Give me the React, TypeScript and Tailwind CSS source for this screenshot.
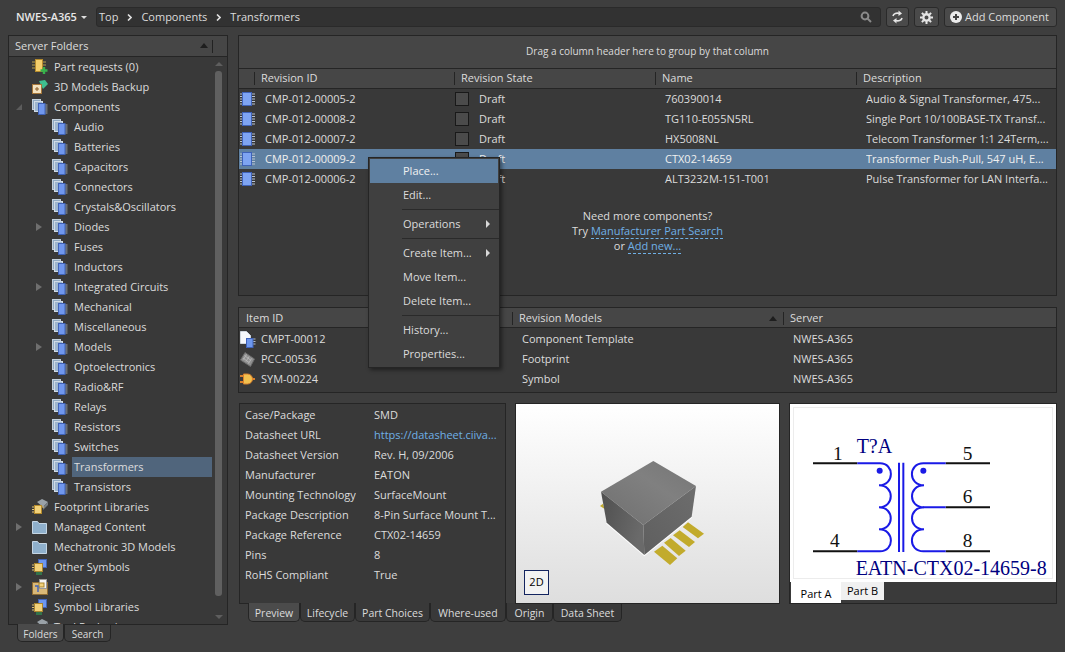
import React from "react";

const folders = [
  ["Audio", false], ["Batteries", false], ["Capacitors", false], ["Connectors", false],
  ["Crystals&Oscillators", false], ["Diodes", true], ["Fuses", false], ["Inductors", false],
  ["Integrated Circuits", true], ["Mechanical", false], ["Miscellaneous", false], ["Models", true],
  ["Optoelectronics", false], ["Radio&RF", false], ["Relays", false], ["Resistors", false],
  ["Switches", false], ["Transformers", false], ["Transistors", false],
] as const;

const revisions = [
  ["CMP-012-00005-2", "760390014", "Audio & Signal Transformer, 475..."],
  ["CMP-012-00008-2", "TG110-E055N5RL", "Single Port 10/100BASE-TX Transf..."],
  ["CMP-012-00007-2", "HX5008NL", "Telecom Transformer 1:1 24Term,..."],
  ["CMP-012-00009-2", "CTX02-14659", "Transformer Push-Pull, 547 uH, E..."],
  ["CMP-012-00006-2", "ALT3232M-151-T001", "Pulse Transformer for LAN Interfa..."],
];

const props = [
  ["Case/Package", "SMD"],
  ["Datasheet URL", "https://datasheet.ciiva..."],
  ["Datasheet Version", "Rev. H, 09/2006"],
  ["Manufacturer", "EATON"],
  ["Mounting Technology", "SurfaceMount"],
  ["Package Description", "8-Pin Surface Mount T..."],
  ["Package Reference", "CTX02-14659"],
  ["Pins", "8"],
  ["RoHS Compliant", "True"],
];

function ChipIcon() {
  return (
    <svg width="15" height="16" viewBox="0 0 15 16">
      <path d="M0 3h2M0 5.5h2M0 8h2M0 10.5h2M0 13h2M12 3h3M12 5.5h3M12 8h3M12 10.5h3M12 13h3" stroke="#b9c4d4" />
      <rect x="2.5" y="1.5" width="9" height="13" fill="#7ea4f2" stroke="#3f62b8" />
    </svg>
  );
}

function FolderChip() {
  return (
    <svg width="16" height="16" viewBox="0 0 16 16">
      <rect x="0.5" y="0.5" width="8" height="10" fill="#8fa9c2" stroke="#c3d1de" />
      <rect x="2.5" y="2.5" width="8" height="10" fill="#9db6cf" stroke="#d0dbe6" />
      <path d="M13 6h2.5M13 8h2.5M13 10h2.5M13 12h2.5M13 14h2.5" stroke="#9aa6b5" />
      <rect x="6.5" y="4.5" width="6.5" height="11" fill="#7097ee" stroke="#3f62b8" />
    </svg>
  );
}

function PlainFolder() {
  return (
    <svg width="15" height="13" viewBox="0 0 15 13">
      <path d="M0.5 0.5h5l1.5 2h7.5v10h-14z" fill="#8fb0cc" stroke="#c5d6e4" />
    </svg>
  );
}

function PartRequest() {
  return (
    <svg width="16" height="16" viewBox="0 0 16 16">
      <path d="M0 3h3M0 6h3M0 9h3M11 3h3M11 6h3" stroke="#b7a14e" />
      <rect x="3.5" y="0.5" width="7" height="12" fill="#f4cf6c" stroke="#b58b2c" />
      <path d="M12 8v7M8.5 11.5h7" stroke="#37b24d" strokeWidth="2.4" />
    </svg>
  );
}

function BackupIcon() {
  return (
    <svg width="16" height="16" viewBox="0 0 16 16">
      <path d="M7 2l6-1 3 4-5 5z" fill="#3fbf8f" />
      <rect x="0.5" y="5.5" width="9" height="9" fill="#f3e2c0" stroke="#a5763a" />
      <path d="M5 8v4M3 10h4" stroke="#8a5a24" />
    </svg>
  );
}

function FootprintLib({ gray = false }: { gray?: boolean }) {
  return (
    <svg width="16" height="16" viewBox="0 0 16 16">
      <path d="M5 3l5-3 6 3-5 5z" fill="#9aa2a8" />
      <path d="M11 8l5-5v3l-5 5z" fill="#767d82" />
      {!gray && <path d="M0 8h2M0 10.5h2M0 13h2M10 8h2" stroke="#e5c67a" />}
      {!gray && <rect x="2.5" y="6.5" width="7" height="8" fill="#f2d27b" stroke="#b58b2c" />}
    </svg>
  );
}

function OtherSymbols() {
  return (
    <svg width="16" height="16" viewBox="0 0 16 16">
      <rect x="6.5" y="0.5" width="8" height="8" fill="#6d97ee" stroke="#3f62b8" />
      <path d="M0 6h2M0 8.5h2M0 11h2" stroke="#e0c070" />
      <rect x="2.5" y="4.5" width="8" height="8" fill="#f2d27b" stroke="#a9852f" />
      <path d="M5 13v3M7 13v3M9 13v3" stroke="#2fae5c" />
    </svg>
  );
}

function ProjectsIcon() {
  return (
    <svg width="16" height="16" viewBox="0 0 16 16">
      <rect x="0.5" y="3.5" width="15" height="12" fill="#d9b877" stroke="#8f6c33" />
      <rect x="7.5" y="0.5" width="7" height="9" fill="#f4f4f4" stroke="#999" />
      <rect x="7" y="4" width="5" height="4" fill="#f2d27b" stroke="#a9852f" />
      <path d="M3 7h3v6" fill="none" stroke="#3f62b8" strokeWidth="1.4" />
    </svg>
  );
}

function DocIcon() {
  return (
    <svg width="16" height="17" viewBox="0 0 16 17">
      <path d="M0.5 0.5h6l4 4v8h-10z" fill="#f6f8fb" stroke="#cfd6de" />
      <path d="M13 8h2.5M13 10.5h2.5M13 13h2.5" stroke="#b4bdc8" />
      <rect x="6.5" y="7.5" width="6.5" height="9" fill="#6d97ee" stroke="#3f62b8" />
    </svg>
  );
}

function FootprintIcon() {
  return (
    <svg width="15" height="15" viewBox="0 0 15 15">
      <path d="M5 0.5l9.5 6.5-4 7.5-10-6.5z" fill="#8f8f8f" stroke="#6a6a6a" />
      <path d="M4.5 3.5l6 4.5M3 6l6 4.5M6.5 2.5l-3 5M9 4.5l-3 5M11.5 6.5l-3 5" stroke="#b5b5b5" />
    </svg>
  );
}

function SymbolIcon() {
  return (
    <svg width="15" height="13" viewBox="0 0 15 13">
      <path d="M0 3h4M0 9h4M11 6h4" stroke="#d9802c" strokeWidth="2" />
      <path d="M3.5 1h4a5 5 0 0 1 0 10h-4z" fill="#f2c14f" stroke="#d9802c" />
    </svg>
  );
}

function Crumb() {
  return (
    <svg className="mx-[9px]" width="5" height="7" viewBox="0 0 5 7" fill="none" stroke="#e0e0e0" strokeWidth="1.6">
      <path d="M1 0.5L4 3.5L1 6.5" />
    </svg>
  );
}

function TreeRow({ label, indent = false, arrow, icon, selected = false }: {
  label: string; indent?: boolean; arrow?: "open" | "closed"; icon: React.ReactNode; selected?: boolean;
}) {
  return (
    <div className={`h-5 flex items-center shrink-0 ${indent ? "pl-[27px]" : "pl-[7px]"}`}>
      <span className="w-[17px] flex justify-start shrink-0">
        {arrow === "closed" && <span className="w-0 h-0 border-y-[4px] border-y-transparent border-l-[6px] border-l-[#6f6f6f]" />}
        {arrow === "open" && <span className="w-0 h-0 border-b-[6px] border-b-[#5c5c5c] border-l-[6px] border-l-transparent" />}
      </span>
      <span className="w-[20px] flex justify-start shrink-0 -ml-[1px]">{icon}</span>
      <span className={`flex-1 h-5 leading-5 pl-[2px] ${selected ? "bg-[#50657c]" : ""}`}>{label}</span>
    </div>
  );
}

function LeftPanel() {
  return (
    <div className="flex flex-col ml-2 w-[220px]">
      <div className="h-[590px] border border-[#252525] bg-[#393939] flex flex-col overflow-hidden">
        <div className="h-[21px] shrink-0 bg-[#464646] border-b border-[#252525] flex items-center pl-[6px] relative">
          <span>Server Folders</span>
          <span className="absolute right-[19px] top-[7px] w-0 h-0 border-x-[4px] border-x-transparent border-b-[5px] border-b-[#1e1e1e]" />
          <span className="absolute right-[14px] top-[4px] w-px h-[13px] bg-[#222]" />
        </div>
        <div className="flex flex-1 min-h-0">
          <div className="flex-1 min-w-0 flex flex-col overflow-hidden">
            <TreeRow label="Part requests (0)" icon={<PartRequest />} />
            <TreeRow label="3D Models Backup" icon={<BackupIcon />} />
            <TreeRow label="Components" arrow="open" icon={<FolderChip />} />
            {folders.map(([name, hasKids]) => (
              <TreeRow key={name} label={name} indent arrow={hasKids ? "closed" : undefined} icon={<FolderChip />} selected={name === "Transformers"} />
            ))}
            <TreeRow label="Footprint Libraries" icon={<FootprintLib />} />
            <TreeRow label="Managed Content" arrow="closed" icon={<PlainFolder />} />
            <TreeRow label="Mechatronic 3D Models" icon={<PlainFolder />} />
            <TreeRow label="Other Symbols" icon={<OtherSymbols />} />
            <TreeRow label="Projects" arrow="closed" icon={<ProjectsIcon />} />
            <TreeRow label="Symbol Libraries" icon={<OtherSymbols />} />
            <TreeRow label="Tool Packaging" icon={<FootprintLib gray />} />
          </div>
          <div className="w-[13px] shrink-0 mr-[2px] flex flex-col items-center pt-[5px] pb-[5px]">
            <span className="w-0 h-0 border-x-[4px] border-x-transparent border-b-[4px] border-b-[#5e5e5e]" />
            <span className="w-[7px] mt-[5px] h-[525px] rounded-[3px] bg-[#606060]" />
            <span className="mt-auto w-0 h-0 border-x-[4px] border-x-transparent border-t-[4px] border-t-[#5e5e5e]" />
          </div>
        </div>
      </div>
      <div className="flex pl-[9px] text-[10px]">
        <span className="h-[18px] w-[47px] -mt-px text-center bg-[#4a4a4a] border border-t-0 border-[#252525] rounded-b-[5px] leading-[20px]">Folders</span>
        <span className="h-[18px] w-[47px] -mt-px text-center border border-t-0 border-[#252525] rounded-b-[5px] leading-[20px]">Search</span>
      </div>
    </div>
  );
}

function ColHead({ label, className = "" }: { label: string; className?: string }) {
  return (
    <div className={`h-[13px] border-l border-[#242424] pl-[6px] flex items-center ${className}`}>{label}</div>
  );
}

function RevisionTable() {
  return (
    <div className="h-[261px] border border-[#252525] bg-[#393939] flex flex-col shrink-0">
      <div className="h-[33px] bg-[#464646] border-b border-[#252525] flex items-center justify-center shrink-0 pb-px text-[10px]">
        Drag a column header here to group by that column
      </div>
      <div className="h-[20px] bg-[#464646] border-b border-[#252525] flex items-center shrink-0">
        <span className="w-[15px]" />
        <ColHead label="Revision ID" className="w-[200px]" />
        <ColHead label="Revision State" className="w-[201px]" />
        <ColHead label="Name" className="w-[201px]" />
        <ColHead label="Description" className="flex-1" />
      </div>
      <div>
        {revisions.map((r, i) => (
          <div key={r[0]} className={`h-5 flex items-center ${i === 3 ? "bg-[#5f80a1] text-[#f0f0f0]" : ""}`}>
            <span className="w-[26px] pl-px"><ChipIcon /></span>
            <span className="w-[190px]">{r[0]}</span>
            <span className="w-[24px]"><span className="block w-[14px] h-[14px] bg-[#4b4b4b] border border-[#191919]" /></span>
            <span className="w-[186px]">Draft</span>
            <span className="w-[201px]">{r[1]}</span>
            <span className="flex-1 whitespace-nowrap overflow-hidden">{r[2]}</span>
          </div>
        ))}
      </div>
      <div className="flex flex-col items-center mt-[19px] leading-[15px]">
        <span>Need more components?</span>
        <span>Try <span className="text-[#6fb0e6] border-b border-dashed border-[#6fb0e6]">Manufacturer Part Search</span></span>
        <span>or <span className="text-[#6fb0e6] border-b border-dashed border-[#6fb0e6]">Add new...</span></span>
      </div>
    </div>
  );
}

function ModelsTable() {
  const rows = [
    [<DocIcon key="a" />, "CMPT-00012", "Component Template"],
    [<FootprintIcon key="b" />, "PCC-00536", "Footprint"],
    [<SymbolIcon key="c" />, "SYM-00224", "Symbol"],
  ];
  return (
    <div className="mt-[11px] h-[86px] border border-[#252525] bg-[#393939] shrink-0">
      <div className="h-[20px] bg-[#464646] border-b border-[#252525] flex items-center pt-px">
        <span className="w-[273px] pl-[7px]">Item ID</span>
        <ColHead label="Revision Models" className="w-[271px] relative" />
        <span className="-ml-[14px] mr-[6px] w-0 h-0 border-x-[4px] border-x-transparent border-b-[5px] border-b-[#1e1e1e]" />
        <ColHead label="Server" className="flex-1" />
      </div>
      <div className="pt-px">
        {rows.map((r, i) => (
          <div key={i} className="h-5 flex items-center">
            <span className="w-[22px] pl-[1px] flex">{r[0]}</span>
            <span className="w-[261px]">{r[1]}</span>
            <span className="w-[271px]">{r[2]}</span>
            <span>NWES-A365</span>
          </div>
        ))}
      </div>
    </div>
  );
}

function Preview3D() {
  return (
    <div className="w-[265px] shrink-0 border border-[#252525] bg-gradient-to-b from-white to-[#dedede] relative">
      <svg width="263" height="199" viewBox="3 12 789 597" className="block">
        <defs>
          <linearGradient id="top" x1="0" y1="1" x2="1" y2="0">
            <stop offset="0" stopColor="#6f6f6f" />
            <stop offset="0.6" stopColor="#808080" />
            <stop offset="1" stopColor="#757575" />
          </linearGradient>
          <linearGradient id="left" x1="0" y1="0" x2="1" y2="0.4">
            <stop offset="0" stopColor="#4f4f4f" />
            <stop offset="1" stopColor="#6a6a6a" />
          </linearGradient>
          <linearGradient id="right" x1="0" y1="1" x2="1" y2="0">
            <stop offset="0" stopColor="#5f5f5f" />
            <stop offset="1" stopColor="#6d6d6d" />
          </linearGradient>
        </defs>
        <path d="M255 318L264 311 268 326z" fill="#c2ab2c" />
        <g fill="#c2ab2c">
          <path d="M417 455l25-18 45 38-22 20z" />
          <path d="M447 428l20-14 45 38-20 16z" />
          <path d="M474 406l20-15 46 35-18 15z" />
          <path d="M503 381l16-14 48 34-18 14z" />
        </g>
        <path d="M275 368L388 465 530 350" fill="none" stroke="#fff" strokeWidth="6" />
        <path d="M258 275L415 183 543 258 385 375z" fill="url(#top)" />
        <path d="M258 275L385 375 388 465 275 368z" fill="url(#left)" />
        <path d="M385 375L543 258 530 350 388 465z" fill="url(#right)" />
      </svg>
      <span className="absolute left-[8px] bottom-[8px] w-[25px] h-[25px] bg-[#f2f2f2] border border-[#13245f] text-black flex items-center justify-center">2D</span>
    </div>
  );
}

function SymbolPreview() {
  const serif = { fontFamily: '"Liberation Serif", serif' };
  return (
    <div className="flex-1 border border-[#252525] flex flex-col bg-[#3a3a3a] text-black">
      <div className="bg-white h-[178px] shrink-0 p-[3px]">
        <div className="border border-[#ececec] h-full">
          <svg width="257" height="170" viewBox="30 24 771 510" className="block">
            <g fill="none" strokeWidth="6">
              <path d="M87 190H220M485 190H618M485 322H618M87 454H220M485 454H618" stroke="#111" />
              <g stroke="#1a1ae6">
                <path d="M220 190H288C332 190 332 256 285 256C332 256 332 322 285 322C332 322 332 388 285 388C332 388 332 454 288 454H220" />
                <path d="M485 190H418C372 190 372 256 420 256C372 256 372 322 420 322C372 322 372 388 420 388C372 388 372 454 418 454H485" />
                <path d="M418 322H485M345 188V456M358 188V456" />
              </g>
            </g>
            <circle cx="287" cy="212" r="9" fill="#1a1ae6" />
            <circle cx="418" cy="212" r="9" fill="#1a1ae6" />
            <g style={serif} fontSize="58" fill="#111">
              <text x="147" y="180">1</text>
              <text x="138" y="441">4</text>
              <text x="536" y="180">5</text>
              <text x="536" y="309">6</text>
              <text x="536" y="441">8</text>
            </g>
            <g style={serif} fill="#000080">
              <text x="218" y="158" fontSize="60">T?A</text>
              <text x="215" y="526" fontSize="60">EATN-CTX02-14659-8</text>
            </g>
          </svg>
        </div>
      </div>
      <div className="flex h-[21px]">
        <span className="w-[50px] ml-px bg-white text-center leading-5 pt-[2px]">Part A</span>
        <span className="w-[43px] h-[18px] bg-[#f0f0f0] text-center leading-[18px]">Part B</span>
      </div>
    </div>
  );
}

function BottomTabs() {
  const tabs = [
    ["Preview", "w-[52px]"], ["Lifecycle", "w-[55px]"], ["Part Choices", "w-[75px]"],
    ["Where-used", "w-[76px]"], ["Origin", "w-[47px]"], ["Data Sheet", "w-[69px]"],
  ];
  return (
    <div className="flex pl-[10px] -mt-px text-[10.5px]">
      {tabs.map(([t, w], i) => (
        <span key={t} className={`${w} h-[19px] text-center leading-[20px] border border-t-0 border-[#252525] rounded-b-[5px] ${i === 0 ? "bg-[#4b4b4b]" : "bg-[#393939]"}`}>{t}</span>
      ))}
    </div>
  );
}

export default function App() {
  return (
    <div
      className="w-[1065px] h-[652px] overflow-hidden bg-[#3e3e3e] text-[#dcdcdc] text-[11px] flex flex-col"
      style={{ fontFamily: '"Open Sans", "Noto Sans", sans-serif' }}
    >
      {/* top bar */}
      <div className="h-[35px] shrink-0 flex items-start pt-[7px] pl-4 pr-2">
        <div className="w-[80px] h-5 flex items-center font-semibold text-[#e8e8e8]">
          NWES-A365
          <span className="ml-[4px] w-0 h-0 border-x-[3px] border-x-transparent border-t-[3px] border-t-[#ddd]" />
        </div>
        <div className="w-[785px] h-5 bg-[#323232] border border-[#2a2a2a] rounded-[3px] flex items-center pl-[2px] pr-2">
          <span>Top</span>
          <Crumb />
          <span>Components</span>
          <Crumb />
          <span>Transformers</span>
          <svg className="ml-auto" width="12" height="12" viewBox="0 0 12 12" fill="none" stroke="#8a8a8a" strokeWidth="2">
            <circle cx="5" cy="5" r="3.4" />
            <path d="M7.5 7.5L11 11" />
          </svg>
        </div>
        <button className="ml-[5px] w-[23px] h-5 bg-[#4a4a4a] border border-[#2a2a2a] rounded-[3px] flex items-center justify-center">
          <svg width="11" height="14" viewBox="0 0 11 14" fill="none" stroke="#e6e6e6" strokeWidth="1.6">
            <path d="M1 6C1.5 3.5 4.5 2.5 7.5 3.5" />
            <path d="M6.5 0.5L10 3.5L6.5 6z" fill="#e6e6e6" stroke="none" />
            <path d="M10 8C9.5 10.5 6.5 11.5 3.5 10.5" />
            <path d="M4.5 13.5L1 10.5L4.5 8z" fill="#e6e6e6" stroke="none" />
          </svg>
        </button>
        <button className="ml-[5px] w-[25px] h-5 bg-[#4a4a4a] border border-[#2a2a2a] rounded-[3px] flex items-center justify-center">
          <svg width="13" height="13" viewBox="0 0 13 13" fill="none" stroke="#e6e6e6">
            <circle cx="6.5" cy="6.5" r="3.2" strokeWidth="2.4" />
            <path d="M6.5 0V2.5M6.5 10.5V13M0 6.5H2.5M10.5 6.5H13M1.9 1.9L3.7 3.7M9.3 9.3L11.1 11.1M1.9 11.1L3.7 9.3M9.3 3.7L11.1 1.9" strokeWidth="2" />
          </svg>
        </button>
        <button className="ml-[5px] flex-1 h-5 bg-[#4a4a4a] border border-[#2a2a2a] rounded-[3px] flex items-center pl-[5px] gap-[3px] whitespace-nowrap">
          <svg width="12" height="12" viewBox="0 0 12 12">
            <circle cx="6" cy="6" r="6" fill="#ececec" />
            <path d="M6 3V9M3 6H9" stroke="#444" strokeWidth="2" />
          </svg>
          Add Component
        </button>
      </div>

      {/* main */}
      <div className="flex gap-[10px] flex-1 min-h-0">
        <LeftPanel />
        <div className="w-[819px] flex flex-col">
          <RevisionTable />
          <ModelsTable />
          <div className="mt-[10px] h-[201px] flex gap-[9px] pl-px shrink-0">
            <div className="w-[267px] shrink-0 border border-[#252525] bg-[#393939] pt-px">
              {props.map(([k, v]) => (
                <div key={k} className="h-5 flex items-center pl-[5px] whitespace-nowrap">
                  <span className="w-[129px]">{k}</span>
                  <span className={k === "Datasheet URL" ? "text-[#6fb0e6]" : ""}>{v}</span>
                </div>
              ))}
            </div>
            <Preview3D />
            <SymbolPreview />
          </div>
          <BottomTabs />
        </div>
      </div>

      {/* context menu */}
      <div className="absolute left-[368px] top-[157px] w-[132px] h-[211px] bg-[#404040] border border-[#252525] shadow-[2px_2px_4px_rgba(0,0,0,0.45)] flex flex-col">
        <div className="h-[24px] bg-[#5f80a1] text-[#f0f0f0] flex items-center pl-[33px] mt-px mx-px shrink-0">Place...</div>
        <div className="h-[24px] flex items-center pl-[34px] shrink-0">Edit...</div>
        <div className="h-px bg-[#2a2a2a] ml-[33px] mt-[2px] shrink-0" />
        <div className="h-[28px] flex items-center pl-[34px] pr-[9px] justify-between shrink-0">
          Operations
          <span className="w-0 h-0 border-y-[4px] border-y-transparent border-l-[4px] border-l-[#d8d8d8]" />
        </div>
        <div className="h-px bg-[#2a2a2a] ml-[33px] shrink-0" />
        <div className="h-[26px] pt-[2px] flex items-center pl-[34px] pr-[9px] justify-between shrink-0">
          Create Item...
          <span className="w-0 h-0 border-y-[4px] border-y-transparent border-l-[4px] border-l-[#d8d8d8]" />
        </div>
        <div className="h-[24px] flex items-center pl-[34px] shrink-0">Move Item...</div>
        <div className="h-[24px] flex items-center pl-[34px] shrink-0">Delete Item...</div>
        <div className="h-px bg-[#2a2a2a] ml-[33px] mt-[2px] shrink-0" />
        <div className="h-[26px] pt-[2px] flex items-center pl-[34px] shrink-0">History...</div>
        <div className="h-[24px] flex items-center pl-[34px] shrink-0">Properties...</div>
      </div>
    </div>
  );
}
